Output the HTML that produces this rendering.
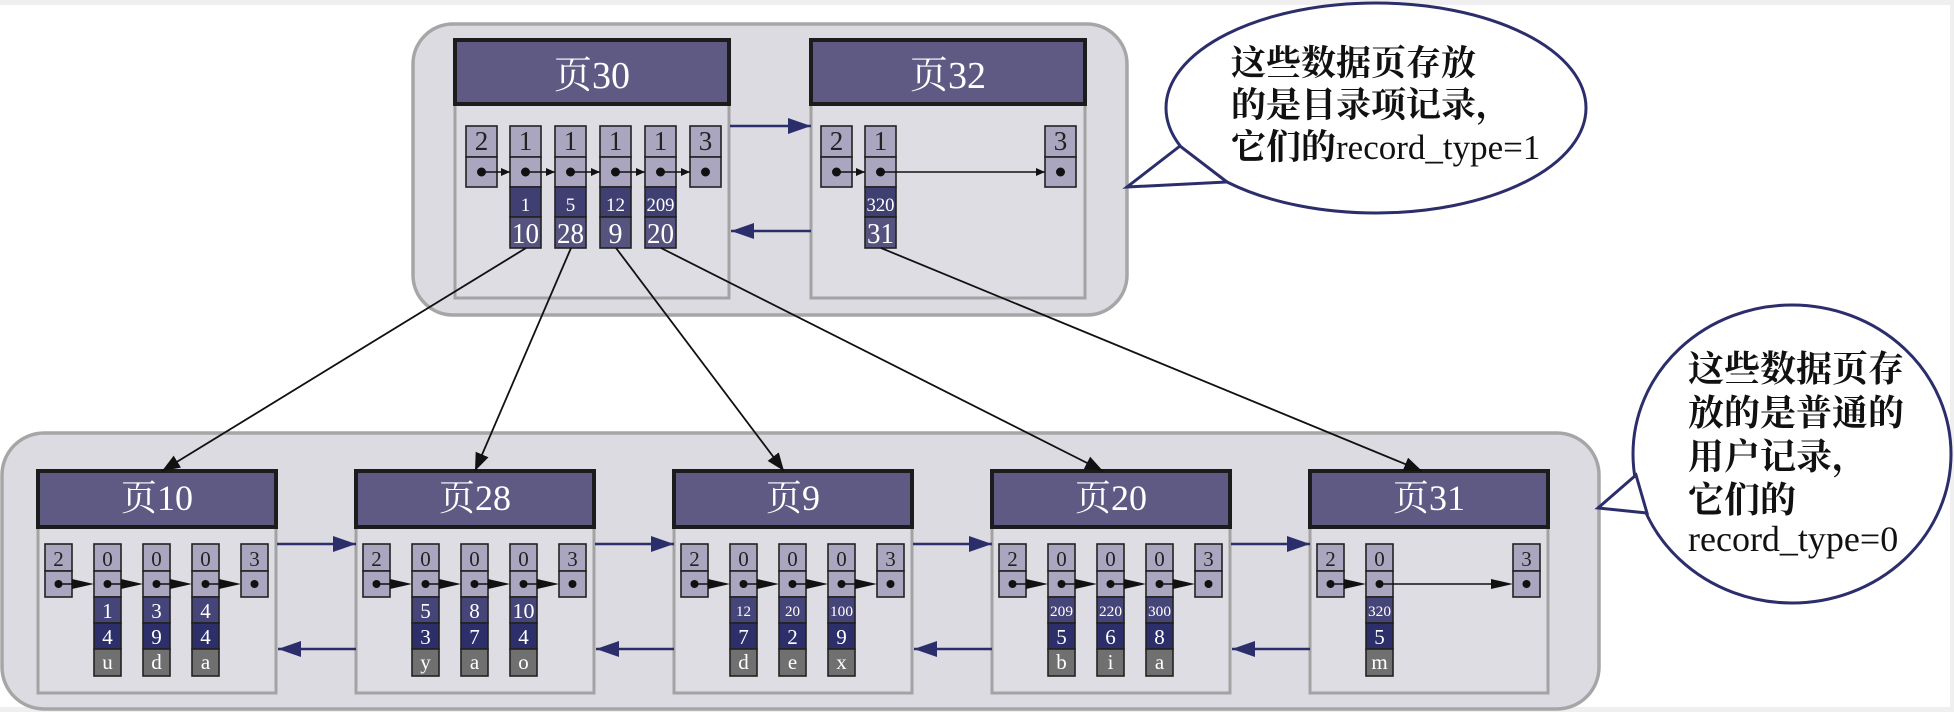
<!DOCTYPE html>
<html><head><meta charset="utf-8"><style>
html,body{margin:0;padding:0;background:#fff;}
svg{display:block;}
.n{font-family:"Liberation Serif","Noto Serif CJK SC",serif;text-anchor:middle;}
.b{font-family:"Liberation Serif","Noto Serif CJK SC",serif;fill:#111;}
.k{font-family:"Noto Serif CJK SC",serif;font-weight:700;}
</style></head><body>
<svg width="1954" height="712" viewBox="0 0 1954 712" xmlns="http://www.w3.org/2000/svg">
<defs>
<marker id="ak" markerUnits="userSpaceOnUse" markerWidth="20" markerHeight="14" refX="18" refY="7" orient="auto"><path d="M0,0 L18,7 L0,14 Z" fill="#111"/></marker>
<marker id="an" markerUnits="userSpaceOnUse" markerWidth="24" markerHeight="16" refX="23" refY="8" orient="auto"><path d="M0,0 L23,8 L0,16 Z" fill="#2b2e6a"/></marker>
<marker id="as" markerUnits="userSpaceOnUse" markerWidth="10" markerHeight="8" refX="9" refY="4" orient="auto"><path d="M0,0 L9,4 L0,8 Z" fill="#111"/></marker>
<g id="tc"><rect x="0" y="126" width="31" height="31" fill="#aaa6bf" stroke="#222" stroke-width="1.6"/><rect x="0" y="157" width="31" height="30" fill="#aaa6bf" stroke="#222" stroke-width="1.6"/><circle cx="15.5" cy="172" r="4.5" fill="#111"/></g>
<g id="tcd"><use href="#tc"/><rect x="0" y="187" width="31" height="30" fill="#403f71" stroke="#222" stroke-width="1.6"/><rect x="0" y="217" width="31" height="31" fill="#57537f" stroke="#222" stroke-width="1.6"/></g>
<g id="bc"><rect x="0" y="544" width="27" height="27" fill="#aaa6bf" stroke="#222" stroke-width="1.6"/><rect x="0" y="571" width="27" height="26" fill="#aaa6bf" stroke="#222" stroke-width="1.6"/><circle cx="13.5" cy="584" r="4" fill="#111"/></g>
<g id="bcd"><use href="#bc"/><rect x="0" y="597" width="27" height="26" fill="#46457a" stroke="#222" stroke-width="1.6"/><rect x="0" y="623" width="27" height="26" fill="#2d2f6a" stroke="#222" stroke-width="1.6"/><rect x="0" y="649" width="27" height="27" fill="#707070" stroke="#222" stroke-width="1.6"/></g>
<path id="tri" d="M0,579 L22,584 L0,589 Z" fill="#111"/>
<g id="bp">
<rect x="0" y="527" width="238" height="166" fill="#dedde3" stroke="#a3a3a3" stroke-width="3"/>
<rect x="0" y="471" width="238" height="56" fill="#5e5a84" stroke="#1c1c1c" stroke-width="4"/>
<use href="#bc" x="7"/><use href="#bc" x="203"/>
</g>
</defs>
<rect x="0" y="0" width="1954" height="712" fill="#fff"/>
<rect x="0" y="0" width="1954" height="5" fill="#efefef"/>
<rect x="1950" y="0" width="4" height="712" fill="#efefef"/>
<rect x="0" y="707" width="1954" height="5" fill="#efefef"/>

<rect x="413" y="24" width="714" height="291" rx="40" fill="#dcdbe1" stroke="#a6a6a6" stroke-width="3.5"/>
<g transform="translate(455,0)">
<rect x="0" y="104" width="274" height="194" fill="#dedde3" stroke="#a3a3a3" stroke-width="3"/>
<rect x="0" y="40" width="274" height="64" fill="#5e5a84" stroke="#1c1c1c" stroke-width="4"/>
<text x="137" y="88" class="n" font-size="38" fill="#fff">页30</text>
<use href="#tc" x="11"/><use href="#tcd" x="55"/><use href="#tcd" x="100"/><use href="#tcd" x="145"/><use href="#tcd" x="190"/><use href="#tc" x="235"/>
<g stroke="#111" stroke-width="1.6" marker-end="url(#as)"><line x1="26.5" y1="172" x2="55" y2="172"/><line x1="70.5" y1="172" x2="100" y2="172"/><line x1="115.5" y1="172" x2="145" y2="172"/><line x1="160.5" y1="172" x2="190" y2="172"/><line x1="205.5" y1="172" x2="235" y2="172"/></g>
<g font-size="27" fill="#222"><text x="26.5" y="150" class="n">2</text><text x="70.5" y="150" class="n">1</text><text x="115.5" y="150" class="n">1</text><text x="160.5" y="150" class="n">1</text><text x="205.5" y="150" class="n">1</text><text x="250.5" y="150" class="n">3</text></g>
<g font-size="19" fill="#fff"><text x="70.5" y="211" class="n">1</text><text x="115.5" y="211" class="n">5</text><text x="160.5" y="211" class="n">12</text><text x="205.5" y="211" class="n" textLength="28" lengthAdjust="spacingAndGlyphs">209</text></g>
<g font-size="28" fill="#fff"><text x="70.5" y="243" class="n" textLength="27" lengthAdjust="spacingAndGlyphs">10</text><text x="115.5" y="243" class="n" textLength="27" lengthAdjust="spacingAndGlyphs">28</text><text x="160.5" y="243" class="n">9</text><text x="205.5" y="243" class="n" textLength="27" lengthAdjust="spacingAndGlyphs">20</text></g>
</g>
<g transform="translate(811,0)">
<rect x="0" y="104" width="274" height="194" fill="#dedde3" stroke="#a3a3a3" stroke-width="3"/>
<rect x="0" y="40" width="274" height="64" fill="#5e5a84" stroke="#1c1c1c" stroke-width="4"/>
<text x="137" y="88" class="n" font-size="38" fill="#fff">页32</text>
<use href="#tc" x="10"/><use href="#tcd" x="54"/><use href="#tc" x="234"/>
<g stroke="#111" stroke-width="1.6" marker-end="url(#as)"><line x1="25.5" y1="172" x2="54" y2="172"/><line x1="69.5" y1="172" x2="234" y2="172"/></g>
<g font-size="27" fill="#222"><text x="25.5" y="150" class="n">2</text><text x="69.5" y="150" class="n">1</text><text x="249.5" y="150" class="n">3</text></g>
<text x="69.5" y="211" class="n" font-size="19" fill="#fff" textLength="28" lengthAdjust="spacingAndGlyphs">320</text>
<text x="69.5" y="243" class="n" font-size="28" fill="#fff" textLength="27" lengthAdjust="spacingAndGlyphs">31</text>
</g>
<g stroke="#2b2e6a" stroke-width="2.5" marker-end="url(#an)"><line x1="730" y1="126" x2="811" y2="126"/><line x1="811" y1="231" x2="731" y2="231"/></g>

<rect x="2" y="433" width="1597" height="276" rx="42" fill="#dcdbe1" stroke="#a6a6a6" stroke-width="3.5"/>

<g transform="translate(38,0)"><use href="#bp"/>
<text x="119" y="510" class="n" font-size="36" fill="#fff">页10</text>
<use href="#bcd" x="56"/><use href="#bcd" x="105"/><use href="#bcd" x="154"/>
<g stroke="#111" stroke-width="1.6"><line x1="20.5" y1="584" x2="40" y2="584"/><line x1="69.5" y1="584" x2="89" y2="584"/><line x1="118.5" y1="584" x2="138" y2="584"/><line x1="167.5" y1="584" x2="187" y2="584"/></g>
<use href="#tri" x="34"/><use href="#tri" x="83"/><use href="#tri" x="132"/><use href="#tri" x="181"/>
<g font-size="21" fill="#222"><text x="20.5" y="566" class="n">2</text><text x="69.5" y="566" class="n">0</text><text x="118.5" y="566" class="n">0</text><text x="167.5" y="566" class="n">0</text><text x="216.5" y="566" class="n">3</text></g>
<g font-size="21" fill="#fff"><text x="69.5" y="618" class="n">1</text><text x="118.5" y="618" class="n">3</text><text x="167.5" y="618" class="n">4</text><text x="69.5" y="644" class="n">4</text><text x="118.5" y="644" class="n">9</text><text x="167.5" y="644" class="n">4</text><text x="69.5" y="669" class="n">u</text><text x="118.5" y="669" class="n">d</text><text x="167.5" y="669" class="n">a</text></g>
</g>
<g transform="translate(356,0)"><use href="#bp"/>
<text x="119" y="510" class="n" font-size="36" fill="#fff">页28</text>
<use href="#bcd" x="56"/><use href="#bcd" x="105"/><use href="#bcd" x="154"/>
<g stroke="#111" stroke-width="1.6"><line x1="20.5" y1="584" x2="40" y2="584"/><line x1="69.5" y1="584" x2="89" y2="584"/><line x1="118.5" y1="584" x2="138" y2="584"/><line x1="167.5" y1="584" x2="187" y2="584"/></g>
<use href="#tri" x="34"/><use href="#tri" x="83"/><use href="#tri" x="132"/><use href="#tri" x="181"/>
<g font-size="21" fill="#222"><text x="20.5" y="566" class="n">2</text><text x="69.5" y="566" class="n">0</text><text x="118.5" y="566" class="n">0</text><text x="167.5" y="566" class="n">0</text><text x="216.5" y="566" class="n">3</text></g>
<g font-size="21" fill="#fff"><text x="69.5" y="618" class="n">5</text><text x="118.5" y="618" class="n">8</text><text x="167.5" y="618" class="n" textLength="22" lengthAdjust="spacingAndGlyphs">10</text><text x="69.5" y="644" class="n">3</text><text x="118.5" y="644" class="n">7</text><text x="167.5" y="644" class="n">4</text><text x="69.5" y="669" class="n">y</text><text x="118.5" y="669" class="n">a</text><text x="167.5" y="669" class="n">o</text></g>
</g>
<g transform="translate(674,0)"><use href="#bp"/>
<text x="119" y="510" class="n" font-size="36" fill="#fff">页9</text>
<use href="#bcd" x="56"/><use href="#bcd" x="105"/><use href="#bcd" x="154"/>
<g stroke="#111" stroke-width="1.6"><line x1="20.5" y1="584" x2="40" y2="584"/><line x1="69.5" y1="584" x2="89" y2="584"/><line x1="118.5" y1="584" x2="138" y2="584"/><line x1="167.5" y1="584" x2="187" y2="584"/></g>
<use href="#tri" x="34"/><use href="#tri" x="83"/><use href="#tri" x="132"/><use href="#tri" x="181"/>
<g font-size="21" fill="#222"><text x="20.5" y="566" class="n">2</text><text x="69.5" y="566" class="n">0</text><text x="118.5" y="566" class="n">0</text><text x="167.5" y="566" class="n">0</text><text x="216.5" y="566" class="n">3</text></g>
<g font-size="15" fill="#fff"><text x="69.5" y="616" class="n">12</text><text x="118.5" y="616" class="n">20</text><text x="167.5" y="616" class="n" textLength="23" lengthAdjust="spacingAndGlyphs">100</text></g>
<g font-size="21" fill="#fff"><text x="69.5" y="644" class="n">7</text><text x="118.5" y="644" class="n">2</text><text x="167.5" y="644" class="n">9</text><text x="69.5" y="669" class="n">d</text><text x="118.5" y="669" class="n">e</text><text x="167.5" y="669" class="n">x</text></g>
</g>
<g transform="translate(992,0)"><use href="#bp"/>
<text x="119" y="510" class="n" font-size="36" fill="#fff">页20</text>
<use href="#bcd" x="56"/><use href="#bcd" x="105"/><use href="#bcd" x="154"/>
<g stroke="#111" stroke-width="1.6"><line x1="20.5" y1="584" x2="40" y2="584"/><line x1="69.5" y1="584" x2="89" y2="584"/><line x1="118.5" y1="584" x2="138" y2="584"/><line x1="167.5" y1="584" x2="187" y2="584"/></g>
<use href="#tri" x="34"/><use href="#tri" x="83"/><use href="#tri" x="132"/><use href="#tri" x="181"/>
<g font-size="21" fill="#222"><text x="20.5" y="566" class="n">2</text><text x="69.5" y="566" class="n">0</text><text x="118.5" y="566" class="n">0</text><text x="167.5" y="566" class="n">0</text><text x="216.5" y="566" class="n">3</text></g>
<g font-size="15" fill="#fff"><text x="69.5" y="616" class="n" textLength="23" lengthAdjust="spacingAndGlyphs">209</text><text x="118.5" y="616" class="n" textLength="23" lengthAdjust="spacingAndGlyphs">220</text><text x="167.5" y="616" class="n" textLength="23" lengthAdjust="spacingAndGlyphs">300</text></g>
<g font-size="21" fill="#fff"><text x="69.5" y="644" class="n">5</text><text x="118.5" y="644" class="n">6</text><text x="167.5" y="644" class="n">8</text><text x="69.5" y="669" class="n">b</text><text x="118.5" y="669" class="n">i</text><text x="167.5" y="669" class="n">a</text></g>
</g>
<g transform="translate(1310,0)"><use href="#bp"/>
<text x="119" y="510" class="n" font-size="36" fill="#fff">页31</text>
<use href="#bcd" x="56"/>
<g stroke="#111" stroke-width="1.6"><line x1="20.5" y1="584" x2="40" y2="584"/><line x1="69.5" y1="584" x2="185" y2="584"/></g>
<use href="#tri" x="34"/><use href="#tri" x="181"/>
<g font-size="21" fill="#222"><text x="20.5" y="566" class="n">2</text><text x="69.5" y="566" class="n">0</text><text x="216.5" y="566" class="n">3</text></g>
<text x="69.5" y="616" class="n" font-size="15" fill="#fff" textLength="23" lengthAdjust="spacingAndGlyphs">320</text>
<g font-size="21" fill="#fff"><text x="69.5" y="644" class="n">5</text><text x="69.5" y="669" class="n">m</text></g>
</g>
<g stroke="#2b2e6a" stroke-width="2.5" marker-end="url(#an)">
<line x1="277" y1="544" x2="356" y2="544"/><line x1="595" y1="544" x2="674" y2="544"/><line x1="913" y1="544" x2="992" y2="544"/><line x1="1231" y1="544" x2="1310" y2="544"/>
<line x1="356" y1="649" x2="278" y2="649"/><line x1="674" y1="649" x2="596" y2="649"/><line x1="992" y1="649" x2="914" y2="649"/><line x1="1310" y1="649" x2="1232" y2="649"/>
</g>

<g stroke="#111" stroke-width="1.8" marker-end="url(#ak)">
<line x1="526" y1="248" x2="162" y2="471"/>
<line x1="571" y1="248" x2="475" y2="471"/>
<line x1="616" y1="248" x2="784" y2="471"/>
<line x1="661" y1="248" x2="1103" y2="471"/>
<line x1="881" y1="248" x2="1422" y2="471"/>
</g>

<ellipse cx="1376" cy="108" rx="210" ry="105" fill="#fff" stroke="#2b2e6a" stroke-width="3"/>
<polygon points="1180,146 1127,187 1227,182" fill="#fff" stroke="#2b2e6a" stroke-width="3"/>
<polygon points="1183,143 1225,178 1215,160" fill="#fff"/>
<polygon points="1182,140 1230,179 1240,150 1200,130" fill="#fff"/>
<g class="b" font-size="35"><text x="1231" y="75" class="k">这些数据页存放</text><text x="1231" y="117" class="k">的是目录项记录，</text><text x="1231" y="159"><tspan class="k">它们的</tspan>record_type=1</text></g>

<ellipse cx="1792" cy="454" rx="159" ry="149" fill="#fff" stroke="#2b2e6a" stroke-width="3"/>
<polygon points="1636,475 1598,508 1647,513" fill="#fff" stroke="#2b2e6a" stroke-width="3"/>
<polygon points="1639,470 1652,516 1665,500 1655,470" fill="#fff"/>
<g class="b" font-size="36"><text x="1688" y="381" class="k">这些数据页存</text><text x="1688" y="425" class="k">放的是普通的</text><text x="1688" y="469" class="k">用户记录，</text><text x="1688" y="512" class="k">它们的</text><text x="1688" y="551">record_type=0</text></g>
</svg>
</body></html>
